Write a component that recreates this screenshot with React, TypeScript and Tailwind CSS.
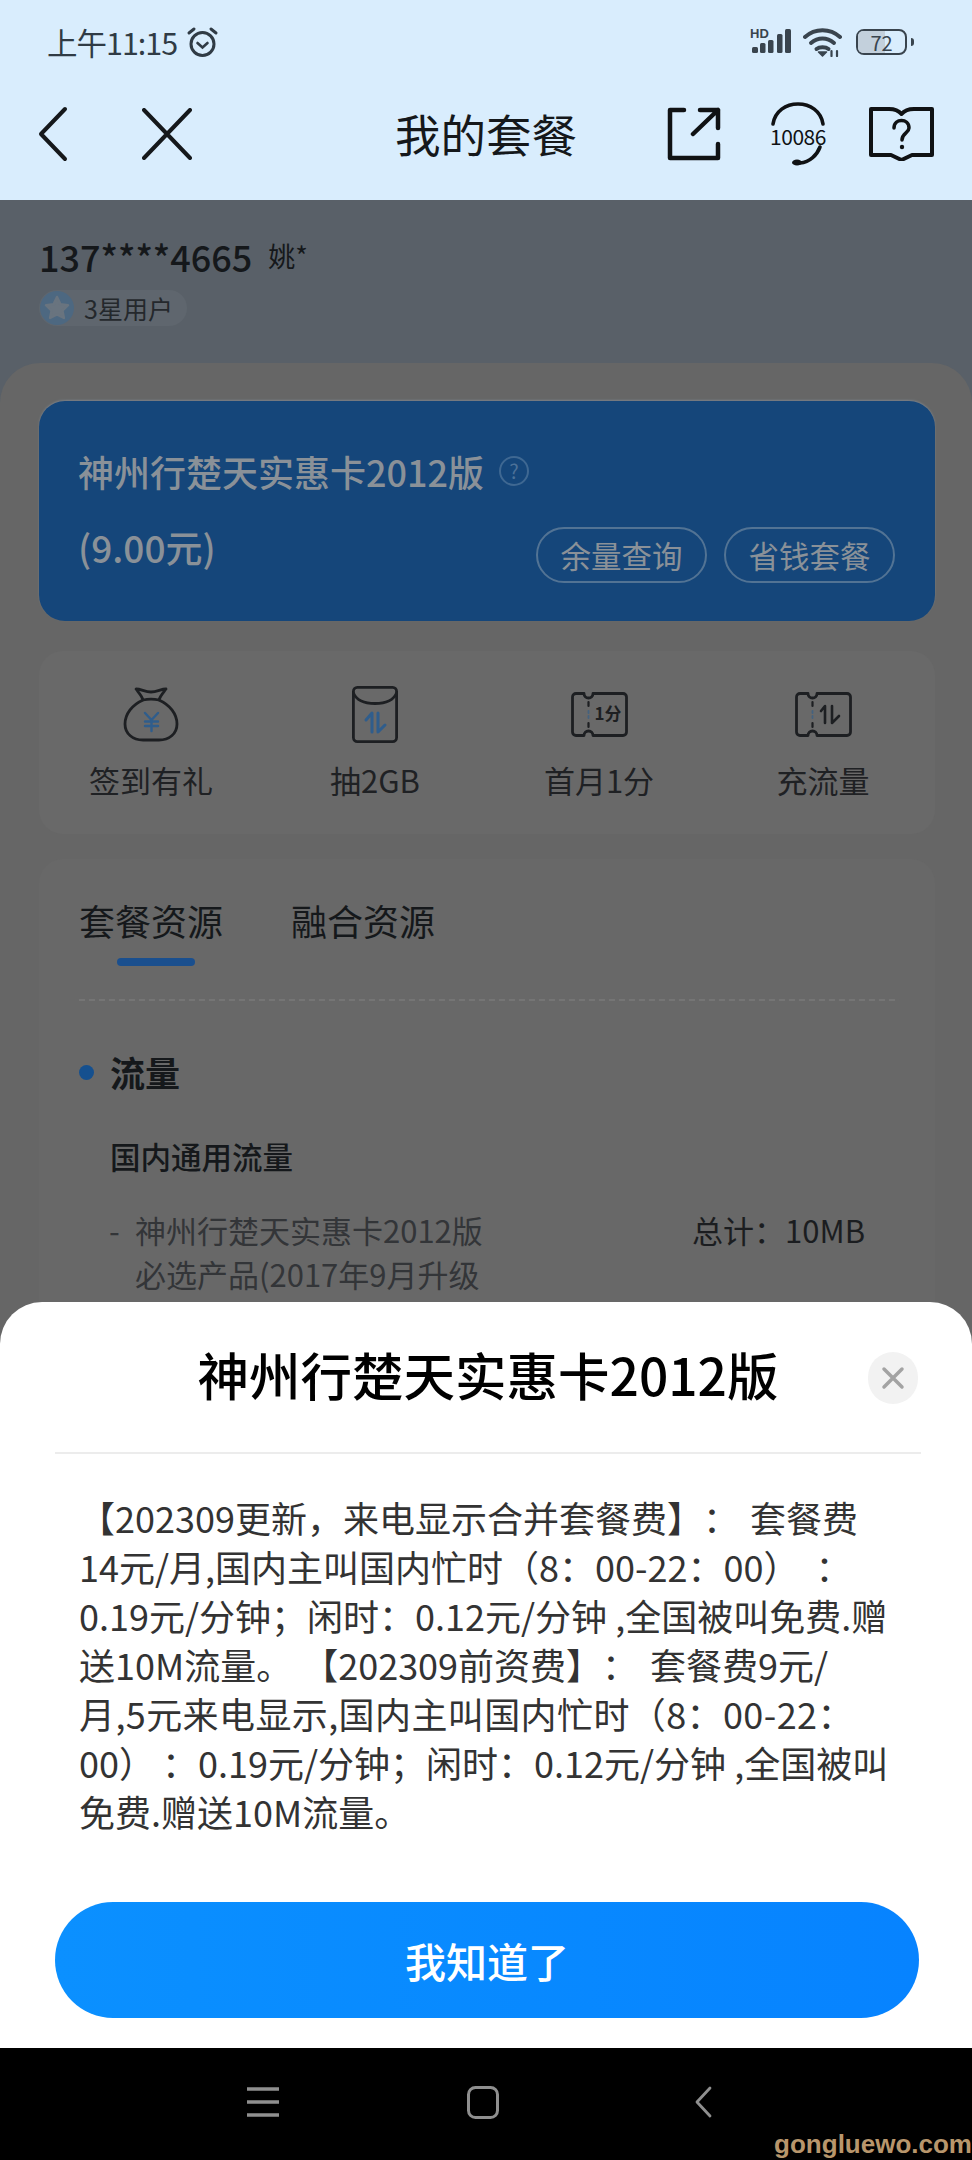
function Ticket({ label }: { label?: string }) {
    return (
        <svg width="57" height="45" viewBox="0 0 57 45" fill="none" stroke="#1d1f22" strokeWidth="2.8" strokeLinejoin="round" strokeLinecap="round">
            <path d="M5 1.500h8a4.500 4.500 0 0 0 9 0h30a3.500 3.500 0 0 1 3.500 3.500v35a3.500 3.500 0 0 1-3.500 3.500H22a4.500 4.500 0 0 0-9 0H5A3.500 3.500 0 0 1 1.500 40V5A3.500 3.500 0 0 1 5 1.500z" />
            <path d="M17.500 10v4M17.500 31v4" strokeWidth="2.200" />
            <path d="M17.500 19v2M17.500 24v2" strokeWidth="1.800" stroke="#44627f" />
            {label ? (
                <text x="37" y="28" fontSize="17" fill="#1d1f22" stroke="none" textAnchor="middle" fontWeight="700">{label}</text>
            ) : (
                <path d="M30 31V14l-4 5M37 14v17l7-7" strokeWidth="2.600" />
            )}
        </svg>
    );
}

function Action({ icon, label }: { icon: React.ReactNode; label: string }) {
    return (
        <div className="flex flex-col items-center">
            <div className="flex h-[58px] items-center justify-center">{icon}</div>
            <span className="mt-[15px] text-[31px] leading-[44px] text-[#1f2124]">{label}</span>
        </div>
    );
}

export default function App() {
    return (
        <div className="flex h-[2160px] w-[972px] flex-col overflow-hidden bg-black font-['Noto_Sans_CJK_SC',sans-serif]">
            {/* Status bar + nav */}
            <header className="h-[200px] shrink-0 bg-[#d9edfd]">
                <div className="flex h-[84px] items-center justify-between pl-[47px] pr-[58px]">
                    <div className="flex items-center text-[#303b45]">
                        <span className="text-[30.500px] leading-none tracking-[-1px]">上午11:15</span>
                        <svg className="ml-[9px]" width="33" height="33" viewBox="0 0 33 33" fill="none" stroke="#303b45" strokeWidth="3" strokeLinecap="round">
                            <circle cx="16.500" cy="18" r="11.500" />
                            <path d="M11.500 17l5 4.500 5-4.500" strokeWidth="2.600" />
                            <path d="M3 7l5-4M30 7l-5-4" />
                        </svg>
                    </div>
                    <div className="flex items-center">
                        <svg width="42" height="30" viewBox="0 0 42 30" fill="#39444e">
                            <text x="0" y="11" fontSize="13" fontWeight="700" fontFamily="Liberation Sans, sans-serif">HD</text>
                            <rect x="2" y="20" width="6" height="6" rx="1.500" />
                            <rect x="10" y="16" width="5.500" height="10" rx="1.500" />
                            <rect x="18" y="13" width="5.500" height="13" rx="1.500" />
                            <rect x="27" y="7" width="5.500" height="19" rx="1.500" />
                            <rect x="35" y="2" width="6" height="24" rx="1.500" />
                        </svg>
                        <svg className="ml-[11px]" width="39" height="29" viewBox="0 0 39 29" fill="none" stroke="#39444e" strokeWidth="4" strokeLinecap="round">
                            <path d="M2 9c10-9 25-9 35 0" />
                            <path d="M8 15c7-6 16-6 23 0" />
                            <path d="M25.500 21c-3-2.500-9-2.500-12 0" />
                            <path d="M15.500 24l4 4 4-4z" fill="#39444e" strokeWidth="1.500" strokeLinejoin="round" />
                            <path d="M28.500 28v-5M34 28v-5" strokeWidth="2.200" />
                        </svg>
                        <div className="relative ml-[14px] flex h-[26px] w-[51px] items-center justify-center rounded-[8px] border-[2.500px] border-[#39444e]">
                            <div className="absolute inset-y-0 left-0 w-[27px] rounded-l-[5px] bg-[#c3d0dc]" />
                            <span className="relative text-[20px] leading-[21px] text-[#39444e]">72</span>
                        </div>
                        <div className="ml-[4px] h-[8px] w-[3px] rounded-r bg-[#39444e]" />
                    </div>
                </div>

                <div className="mt-[9px] grid h-[82px] grid-cols-[1fr_auto_1fr] items-center px-[38px]">
                    <div className="flex items-center">
                        <svg width="30" height="56" viewBox="0 0 30 56" fill="none" stroke="#15181b" strokeWidth="4" strokeLinecap="round" strokeLinejoin="round">
                            <path d="M27 3L3 28l24 25" />
                        </svg>
                        <svg className="ml-[74px]" width="50" height="52" viewBox="0 0 50 52" fill="none" stroke="#15181b" strokeWidth="4" strokeLinecap="round">
                            <path d="M2 2l46 48M48 2L2 50" />
                        </svg>
                    </div>
                    <h1 className="text-[45.500px] font-normal leading-none text-[#15181b]">我的套餐</h1>
                    <div className="flex items-center justify-end">
                        <svg width="54" height="54" viewBox="0 0 54 54" fill="none" stroke="#101214" strokeWidth="4.500" strokeLinecap="round" strokeLinejoin="round">
                            <path d="M17 3H3v48h48V37" />
                            <path d="M26 27L51 3M33 3h18v18" />
                        </svg>
                        <div className="relative ml-[44px] flex h-[64px] w-[66px] items-center justify-center">
                            <svg className="absolute inset-0" width="66" height="64" viewBox="0 0 66 64" fill="none" stroke="#101214" strokeWidth="3.600" strokeLinecap="round">
                                <path d="M8 22C10 9 21 2 33 2s23 7 25 20" />
                                <path d="M55 45c-3 8-10 15-20 16" />
                                <ellipse cx="32" cy="60.500" rx="5" ry="3" fill="#101214" stroke="none" />
                            </svg>
                            <span className="relative mt-[4px] text-[21px] leading-none tracking-[-0.5px] text-[#101214]">10086</span>
                        </div>
                        <svg className="ml-[38px]" width="65" height="54" viewBox="0 0 65 54" fill="none" stroke="#101214" strokeWidth="4" strokeLinejoin="round" strokeLinecap="round">
                            <path d="M2 2h18c6 0 10 2 12.500 5C35 4 39 2 45 2h18v46H43l-10.500 5L22 48H2z" />
                            <path d="M25 21c0-10 15-10 15 0 0 5-7 5-7 12" strokeWidth="3.500" />
                            <circle cx="33" cy="40" r="2.200" fill="#101214" stroke="none" />
                        </svg>
                    </div>
                </div>
            </header>

            {/* Dimmed page + bottom sheet */}
            <main className="relative min-h-0 flex-1 overflow-hidden bg-[#596068]">
                <div className="px-[39px] pt-[34px]">
                    <div className="flex items-center">
                        <span className="text-[36px] font-medium leading-[44px] text-[#15181b]">137****4665</span>
                        <span className="ml-[16px] text-[27px] leading-[44px] text-[#15181b]">姚*</span>
                    </div>
                    <div className="mt-[12px] flex h-[36px] w-[148px] items-center rounded-full bg-[#5f666e]">
                        <svg width="36" height="36" viewBox="0 0 36 36">
                            <circle cx="18" cy="18" r="17" fill="#4d6881" />
                            <path d="M18 7l3.400 7.200 7.600 1-5.600 5.300 1.500 7.500L18 24.300 11.100 28l1.500-7.500L7 15.200l7.600-1z" fill="#69747f" stroke="#69747f" strokeWidth="2.500" strokeLinejoin="round" />
                        </svg>
                        <span className="ml-[9px] text-[25px] leading-none text-[#24282c]">3星用户</span>
                    </div>
                </div>

                <div className="mt-[37px] h-[1700px] rounded-t-[40px] bg-[#666666] pl-[39px] pr-[37px] pt-[38px]">
                    <section className="h-[220px] rounded-[26px] bg-[#15467a] pl-[39px] pr-[40px] pt-[48px] shadow-[0_-1px_2px_#7a8088]">
                        <div className="flex items-center">
                            <span className="text-[36px] font-medium leading-[44px] text-[#8a9198]">神州行楚天实惠卡2012版</span>
                            <span className="ml-[15px] flex h-[30px] w-[30px] items-center justify-center rounded-full border-2 border-[#3f6892] text-[20px] leading-none text-[#4c7198]">?</span>
                        </div>
                        <div className="mt-[32px] flex items-center justify-between">
                            <span className="mb-[16px] text-[37px] font-medium leading-[44px] text-[#8a9198]">(9.00元)</span>
                            <div className="flex gap-[17px]">
                                <span className="flex h-[56px] w-[171px] items-center justify-center rounded-full border-2 border-[#527394] text-[30.500px] leading-none text-[#8a9198]">余量查询</span>
                                <span className="flex h-[56px] w-[171px] items-center justify-center rounded-full border-2 border-[#527394] text-[30.500px] leading-none text-[#8a9198]">省钱套餐</span>
                            </div>
                        </div>
                    </section>

                    <section className="mt-[30px] grid h-[183px] grid-cols-4 rounded-[24px] bg-[#696969] pt-[34px]">
                        <Action
                            label="签到有礼"
                            icon={
                                <svg width="56" height="56" viewBox="0 0 56 56" fill="none" stroke="#1d1f22" strokeWidth="2.800" strokeLinejoin="round" strokeLinecap="round">
                                    <path d="M20 14c-1-4-4-7-7-11 5 0 9 3 15 3s10-3 15-3c-3 4-6 7-7 11" />
                                    <path d="M20 14C9 19 2 28 2 38c0 10 8 16 18 16h16c10 0 18-6 18-16 0-10-7-19-18-24-5-1-11-1-16 0z" />
                                    <path d="M22 27l6.500 7 6.500-7M28.500 34v11M22 35.500h13M22 40h13" stroke="#2f5d8c" strokeWidth="2.400" />
                                </svg>
                            }
                        />
                        <Action
                            label="抽2GB"
                            icon={
                                <svg width="46" height="57" viewBox="0 0 46 57" fill="none" stroke="#1d1f22" strokeWidth="2.800" strokeLinejoin="round" strokeLinecap="round">
                                    <rect x="1.400" y="1.400" width="43.200" height="54.200" rx="4" />
                                    <path d="M1.400 7c3 7 11 10.500 21.600 10.500S41.600 14 44.600 7" />
                                    <path d="M20 46V27l-6 7M26 27v19l7-7" stroke="#2f5d8c" strokeWidth="3" />
                                </svg>
                            }
                        />
                        <Action label="首月1分" icon={<Ticket label="1分" />} />
                        <Action label="充流量" icon={<Ticket />} />
                    </section>

                    <section className="mt-[25px] h-[700px] rounded-[24px] bg-[#686868] px-[40px] pt-[37px]">
                        <div className="flex gap-[68px] text-[36px] leading-[48px] text-[#15181b]">
                            <span>套餐资源</span>
                            <span>融合资源</span>
                        </div>
                        <div className="ml-[38px] mt-[14px] h-[8px] w-[78px] rounded-full bg-[#1a4f8e]" />
                        <div className="mt-[33px] border-t-2 border-dashed border-[#757575]" />
                        <div className="mt-[47px] flex items-center">
                            <span className="h-[15px] w-[15px] rounded-full bg-[#15508f]" />
                            <span className="ml-[16px] text-[35px] font-bold leading-[48px] text-[#15181b]">流量</span>
                        </div>
                        <div className="ml-[31px] mt-[40px] text-[30.500px] font-medium leading-[40px] text-[#15181b]">国内通用流量</div>
                        <div className="mt-[32px] flex items-start justify-between pr-[30px]">
                            <div className="flex text-[31px] leading-[44px] text-[#333538]">
                                <span className="ml-[30px] w-[26px]">-</span>
                                <span>
                                    神州行楚天实惠卡2012版
                                    <br />
                                    必选产品(2017年9月升级
                                </span>
                            </div>
                            <span className="text-[31px] leading-[44px] text-[#1b1d20]">总计：10MB</span>
                        </div>
                    </section>
                </div>

                <div className="absolute inset-x-0 bottom-0 h-[746px] rounded-t-[42px] bg-white pl-[55px] pr-[51px]">
                    <div className="relative flex h-[152px] items-center justify-center border-b-2 border-[#ececec]">
                        <h2 className="mt-[-6px] text-[51.500px] font-medium leading-none text-black">神州行楚天实惠卡2012版</h2>
                        <button className="absolute right-[3px] top-[50px] flex h-[52px] w-[50px] items-center justify-center rounded-full bg-[#f2f2f2]">
                            <svg width="24" height="24" viewBox="0 0 24 24" fill="none" stroke="#a3a3a3" strokeWidth="3.500" strokeLinecap="round">
                                <path d="M3 3l18 18M21 3L3 21" />
                            </svg>
                        </button>
                    </div>
                    <p className="ml-[24px] mt-[39px] whitespace-nowrap text-[36px] leading-[49px] text-[#333333] [text-spacing-trim:space-all]">
                        【202309更新，来电显示合并套餐费】：<span className="ml-[11px]">套餐费</span>
                        <br />
                        14元/月,国内主叫国内忙时（8：00-22：00）<span className="ml-[16px]">：</span>
                        <br />
                        0.19元/分钟；闲时：0.12元/分钟 ,全国被叫免费.赠
                        <br />
                        送10M流量。<span className="ml-[10px]">【202309前资费】：</span><span className="ml-[12px]">套餐费9元/</span>
                        <br />
                        <span className="tracking-[0.4px]">月,5元来电显示,国内主叫国内忙时（8：00-22：</span>
                        <br />
                        00）<span className="ml-[7px]">：0.19元/分钟；闲时：0.12元/分钟 ,全国被叫</span>
                        <br />
                        免费.赠送10M流量。
                    </p>
                    <button className="absolute bottom-[30px] left-[55px] right-[53px] flex h-[116px] items-center justify-center rounded-full bg-gradient-to-r from-[#0b90ff] to-[#0783ff] text-[41px] font-medium leading-none text-white">
                        我知道了
                    </button>
                </div>
            </main>

            {/* System nav */}
            <footer className="relative flex h-[112px] shrink-0 items-start bg-black pl-[247px] pt-[38px]">
                <svg width="32" height="32" viewBox="0 0 32 32" fill="none" stroke="#8f8f8f" strokeWidth="3.500">
                    <path d="M0 3h32M0 16h32M0 29h32" />
                </svg>
                <svg className="ml-[188px]" width="32" height="33" viewBox="0 0 32 33" fill="none" stroke="#8f8f8f" strokeWidth="3">
                    <rect x="1.500" y="1.500" width="29" height="30" rx="7" />
                </svg>
                <svg className="ml-[196px]" width="17" height="32" viewBox="0 0 17 32" fill="none" stroke="#8f8f8f" strokeWidth="2.800" strokeLinecap="round" strokeLinejoin="round">
                    <path d="M15 2L2 16l13 14" />
                </svg>
                <span className="absolute bottom-0 right-0 font-['Liberation_Sans',sans-serif] text-[26px] font-bold leading-[32px] text-[#b8966c]">gongluewo.com</span>
            </footer>
        </div>
    );
}
